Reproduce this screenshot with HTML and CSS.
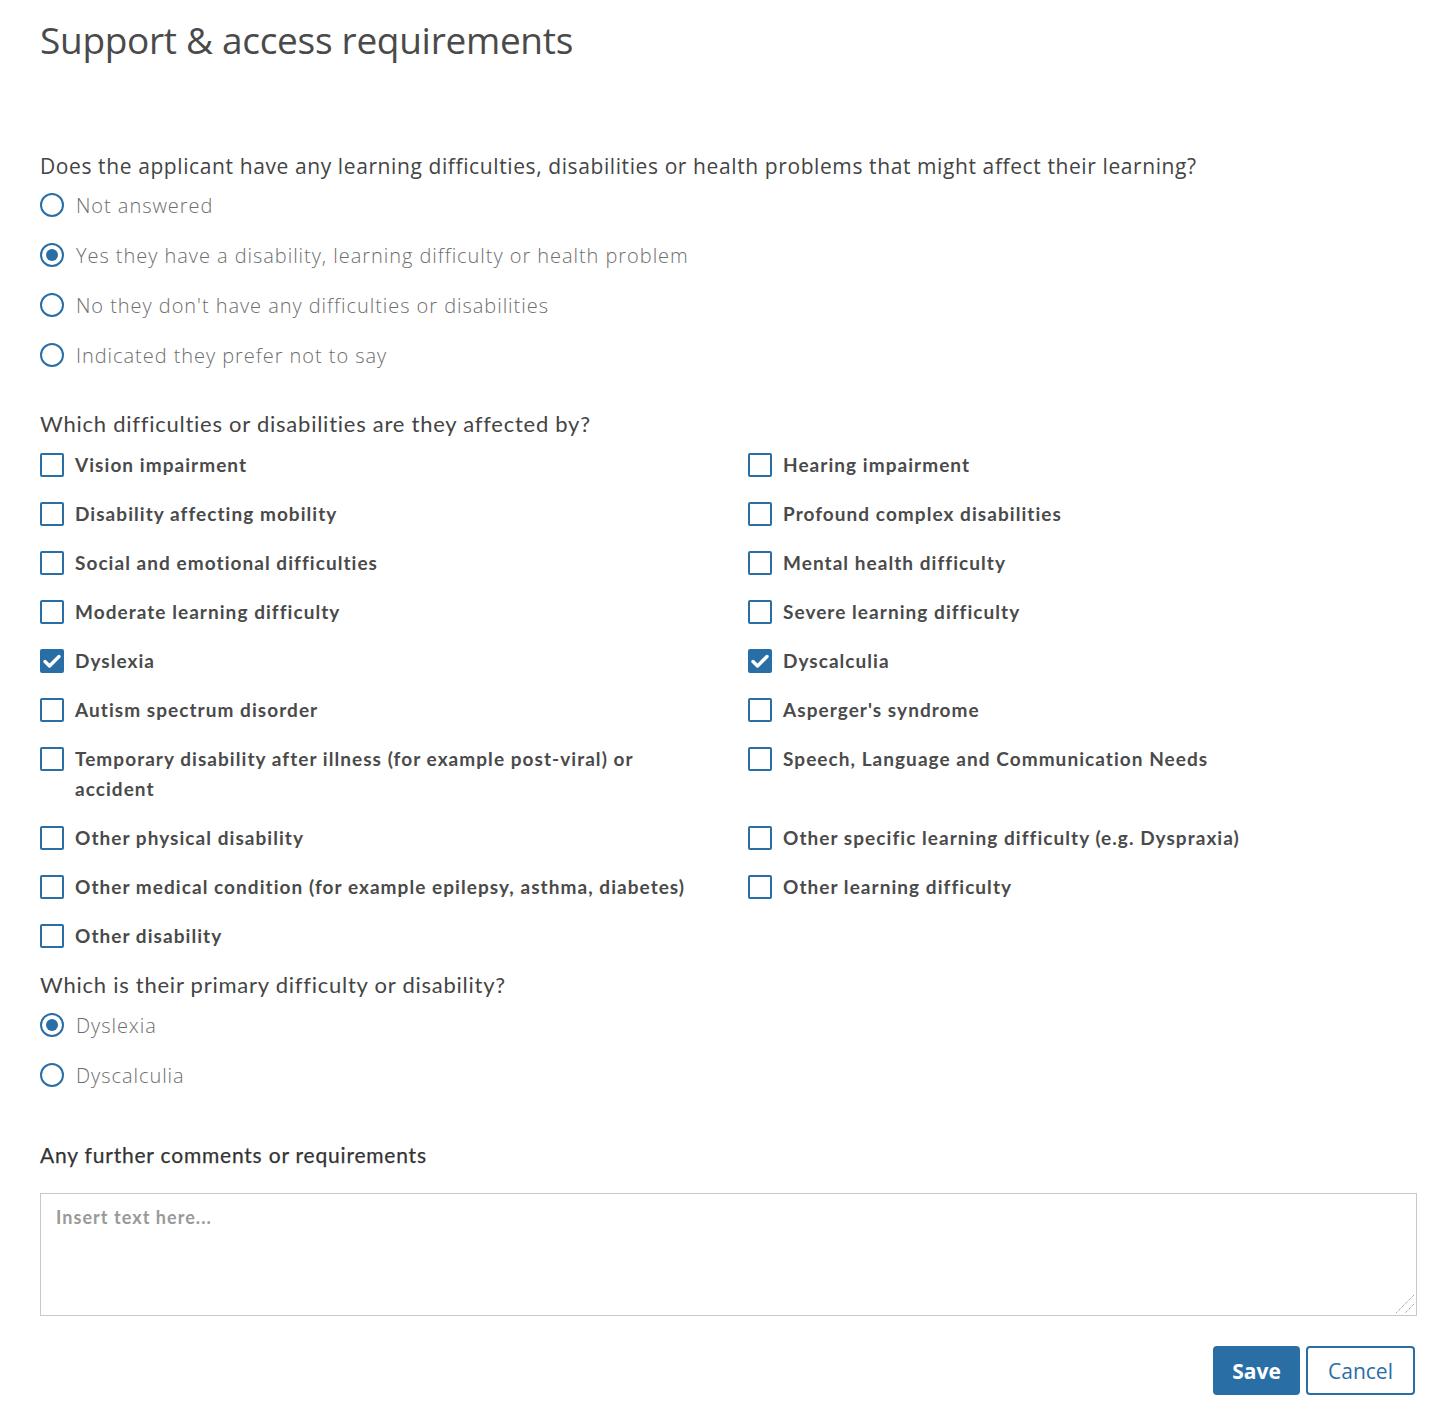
FILE: index.html
```html
<!DOCTYPE html>
<html lang="en">
<head>
<meta charset="utf-8">
<title>Support &amp; access requirements</title>
<link rel="stylesheet" href="styles.css">
</head>
<body>
<main class="page">
  <h1 class="title">Support &amp; access requirements</h1>

  <section class="group q1">
    <p class="question seg">Does the applicant have any learning difficulties, disabilities or health problems that might affect their learning?</p>
    <div class="radios">
      <label class="radio"><span class="dot"></span><span class="rlabel">Not answered</span></label>
      <label class="radio"><span class="dot on"></span><span class="rlabel">Yes they have a disability, learning difficulty or health problem</span></label>
      <label class="radio"><span class="dot"></span><span class="rlabel">No they don't have any difficulties or disabilities</span></label>
      <label class="radio"><span class="dot"></span><span class="rlabel">Indicated they prefer not to say</span></label>
    </div>
  </section>

  <section class="group q2">
    <p class="question mul">Which difficulties or disabilities are they affected by?</p>
    <div class="checks">
      <label class="check"><span class="box"></span><span class="clabel">Vision impairment</span></label>
      <label class="check"><span class="box"></span><span class="clabel">Hearing impairment</span></label>
      <label class="check"><span class="box"></span><span class="clabel">Disability affecting mobility</span></label>
      <label class="check"><span class="box"></span><span class="clabel">Profound complex disabilities</span></label>
      <label class="check"><span class="box"></span><span class="clabel">Social and emotional difficulties</span></label>
      <label class="check"><span class="box"></span><span class="clabel">Mental health difficulty</span></label>
      <label class="check"><span class="box"></span><span class="clabel">Moderate learning difficulty</span></label>
      <label class="check"><span class="box"></span><span class="clabel">Severe learning difficulty</span></label>
      <label class="check"><span class="box on"><svg viewBox="0 0 24 24" width="24" height="24"><path d="M5 12.5l4.5 4.5L19 7.5" fill="none" stroke="#fff" stroke-width="3.4" stroke-linecap="round" stroke-linejoin="round"/></svg></span><span class="clabel">Dyslexia</span></label>
      <label class="check"><span class="box on"><svg viewBox="0 0 24 24" width="24" height="24"><path d="M5 12.5l4.5 4.5L19 7.5" fill="none" stroke="#fff" stroke-width="3.4" stroke-linecap="round" stroke-linejoin="round"/></svg></span><span class="clabel">Dyscalculia</span></label>
      <label class="check"><span class="box"></span><span class="clabel">Autism spectrum disorder</span></label>
      <label class="check"><span class="box"></span><span class="clabel">Asperger's syndrome</span></label>
      <label class="check"><span class="box"></span><span class="clabel">Temporary disability after illness (for example post-viral) or accident</span></label>
      <label class="check"><span class="box"></span><span class="clabel">Speech, Language and Communication Needs</span></label>
      <label class="check"><span class="box"></span><span class="clabel">Other physical disability</span></label>
      <label class="check"><span class="box"></span><span class="clabel">Other specific learning difficulty (e.g. Dyspraxia)</span></label>
      <label class="check"><span class="box"></span><span class="clabel">Other medical condition (for example epilepsy, asthma, diabetes)</span></label>
      <label class="check"><span class="box"></span><span class="clabel">Other learning difficulty</span></label>
      <label class="check"><span class="box"></span><span class="clabel">Other disability</span></label>
    </div>
  </section>

  <section class="group q3">
    <p class="question mul">Which is their primary difficulty or disability?</p>
    <div class="radios r2">
      <label class="radio"><span class="dot on"></span><span class="rlabel">Dyslexia</span></label>
      <label class="radio"><span class="dot"></span><span class="rlabel">Dyscalculia</span></label>
    </div>
  </section>

  <section class="group q4">
    <p class="question comments">Any further comments or requirements</p>
    <div class="textarea"><span class="placeholder">Insert text here...</span><svg class="grip" viewBox="0 0 20 20" width="20" height="20"><path d="M19 1L1 19M19 10L10 19" stroke="#888" stroke-width="1" stroke-dasharray="1 1"/></svg></div>
  </section>

  <div class="actions">
    <button class="btn save">Save</button>
    <button class="btn cancel">Cancel</button>
  </div>
</main>
</body>
</html>
```

FILE: styles.css
```css
* { box-sizing: border-box; }
html, body { margin: 0; padding: 0; background: #fff; }
body { color: #444; font-family: "Open Sans", "Noto Sans", sans-serif; }

.page { padding: 12px 33px 0 40px; width: 1449px; }

.title {
  margin: 0;
  font-family: "Open Sans", sans-serif;
  font-weight: 400;
  font-size: 37px;
  line-height: 56px;
  color: #4a4a4a;
  letter-spacing: -0.3px;
}

.group { margin: 0; }
.q1 { margin-top: 84px; }
.q2 { margin-top: 41px; }
.q3 { margin-top: 20px; }
.q4 { margin-top: 52px; }

.question {
  margin: 0;
  font-size: 20px;
  line-height: 28px;
  color: #444;
}
.seg { font-family: "Open Sans", sans-serif; font-weight: 400; font-size: 21px; letter-spacing: 0.6px; }
.mul { font-family: "Lato", sans-serif; font-weight: 400; font-size: 22px; letter-spacing: 0.75px; }
.comments { font-family: "Lato", sans-serif; font-weight: 400; font-size: 21px; color: #333; letter-spacing: 0.8px; -webkit-text-stroke: 0.25px #333; }

.radios { display: flex; flex-direction: column; gap: 22px; margin-top: 11px; }
.radios.r2 { margin-top: 12px; }
.radio { display: flex; align-items: center; gap: 12px; height: 28px; }
.dot {
  width: 24px; height: 24px; border-radius: 50%;
  border: 2px solid #2a6ea6; flex: none; position: relative;
}
.dot.on::after {
  content: ""; position: absolute; left: 4px; top: 4px;
  width: 12px; height: 12px; border-radius: 50%; background: #2a6ea6;
}
.rlabel {
  font-family: "Open Sans", sans-serif; font-weight: 300; font-size: 20px;
  color: #6e6e6e; letter-spacing: 0.95px;
}

.checks {
  display: grid;
  grid-template-columns: 688px 1fr;
  column-gap: 20px;
  row-gap: 19px;
  margin-top: 12px;
}
.check { display: flex; align-items: flex-start; gap: 11px; }
.box {
  width: 24px; height: 24px; flex: none; border: 2px solid #2a6ea6;
  border-radius: 2px; margin-top: 3px; position: relative;
}
.box.on { background: #2a6ea6; }
.box svg { position: absolute; left: -2px; top: -2px; }
.clabel {
  font-family: "Lato", sans-serif; font-weight: 700; font-size: 19px;
  line-height: 30px; color: #4a4a4a; letter-spacing: 1.05px;
  max-width: 620px;
}

.textarea {
  margin-top: 24px;
  width: 1377px; height: 123px;
  border: 1px solid #c8c8c8;
  position: relative;
  padding: 12px 15px;
}
.placeholder {
  font-family: "Lato", sans-serif; font-weight: 700; font-size: 18px;
  color: #999; letter-spacing: 1.05px;
}
.grip { position: absolute; right: 1px; bottom: 1px; }

.actions { display: flex; justify-content: flex-end; gap: 6px; margin-top: 30px; padding-right: 1px; }
.btn {
  height: 49px; border-radius: 4px; font-size: 21px; cursor: pointer;
  font-family: "Open Sans", sans-serif;
}
.save { width: 87px; background: #2a6ea6; color: #fff; border: 2px solid #2a6ea6; font-weight: 700; }
.cancel { width: 109px; background: #fff; color: #2a6ea6; border: 2px solid #2a6ea6; font-weight: 400; }
```
